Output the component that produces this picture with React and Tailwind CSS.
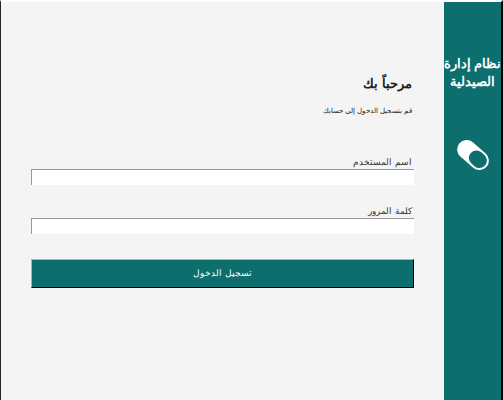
import { useState } from "react"

// شاشة تسجيل الدخول
function PillIcon() {
  return (
    <svg viewBox="0 0 40 40" className="h-[40px] w-[40px]" fill="none">
      <g transform="rotate(41 20 20)">
        <rect x="2" y="10.5" width="36" height="19" rx="9.5" fill="#fff" />
        <path d="M24.5 12.5h4a7.5 7.5 0 0 1 0 15h-4a7.5 7.5 0 0 1 0-15z" fill="#0d6e6e" />
      </g>
    </svg>
  )
}

function Field({ label, type, value, onChange }) {
  return (
    <div>
      <label className="block pr-[2px] text-[9px] leading-[14px] text-[#333]">{label}</label>
      <input
        type={type}
        value={value}
        onChange={(e) => onChange(e.target.value)}
        className="block h-[16px] w-full border-t border-l border-[#999] bg-white"
      />
    </div>
  )
}

export default function App() {
  const [username, setUsername] = useState("")
  const [password, setPassword] = useState("")

  return (
    <div
      dir="rtl"
      className="flex h-[400px] w-[503px] border-t-2 border-r-2 border-l border-t-white border-r-black border-l-[#222] bg-[#f4f4f4] font-['Liberation_Sans',sans-serif]"
    >
      <aside className="flex h-full w-[57px] shrink-0 flex-col items-center bg-[#0d6e6e] pt-[53px] text-white">
        <h1 className="whitespace-nowrap text-center text-[12.5px] font-bold leading-[18px]">
          نظام إدارة
          <br />
          الصيدلية
        </h1>
        <div className="mt-[44px]">
          <PillIcon />
        </div>
      </aside>

      <main className="flex-1 px-[30px] pt-[72px]">
        <h2 className="pr-[2px] text-[13px] font-bold leading-[20px] text-[#222]">مرحباً بك</h2>
        <p className="mt-[10px] pr-[2px] text-[7px] leading-[14px] text-[#222]">قم بتسجيل الدخول إلى حسابك</p>

        <div className="mt-[37px] flex flex-col gap-[19px]">
          <Field label="اسم المستخدم" type="text" value={username} onChange={setUsername} />
          <Field label="كلمة المرور" type="password" value={password} onChange={setPassword} />
        </div>

        <button className="mt-[25px] block h-[29px] w-full border-t border-l border-r border-b border-t-[#9bbcbc] border-l-[#9bbcbc] border-r-black border-b-black bg-[#0d6e6e] text-center text-[8.5px] text-white">
          تسجيل الدخول
        </button>
      </main>
    </div>
  )
}
